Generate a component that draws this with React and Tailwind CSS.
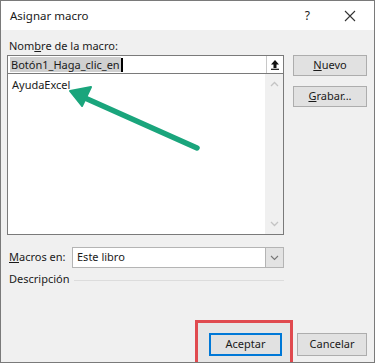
import React from "react";

export default function App() {
  return (
    <div className="relative w-[375px] h-[363px] border border-[#7a7a7a] bg-[#f0f0f0] flex flex-col text-[11px] text-[#1a1a1a] overflow-hidden" style={{ fontFamily: '"Noto Sans", "Open Sans", sans-serif' }}>
      {/* title bar */}
      <div className="h-[29px] bg-white flex items-center pl-[9px] pr-[14px] shrink-0">
        <span className="text-[11.5px] flex-1">Asignar macro</span>
        <span className="text-[12px] mr-[34px]">?</span>
        <svg width="12" height="12" viewBox="0 0 12 12" className="mr-[4px]">
          <path d="M1 1 L11 11 M11 1 L1 11" stroke="#333" strokeWidth="1.1" />
        </svg>
      </div>

      <div className="flex flex-col pl-[6px] pr-[7px] flex-1">
        <div className="h-[25px] flex items-end pl-[2px] pb-[1px]">
          <span>Nom<span className="underline">b</span>re de la macro:</span>
        </div>
        <div className="flex">
          {/* left column */}
          <div className="w-[277px] flex flex-col">
            <div className="h-[19px] border border-[#7a7a7a] bg-white flex items-center">
              <div className="flex-1 flex items-center pl-[2px]">
                <span className="bg-[#d0d0d0] px-[1px] leading-[15px]">Botón1_Haga_clic_en</span>
                <span className="w-[2px] h-[14px] bg-black"></span>
              </div>
              <div className="w-[17px] h-[17px] flex items-center justify-center border-l border-[#c8c8c8] bg-white">
                <svg width="10" height="11" viewBox="0 0 10 11">
                  <path d="M5 1 L1 5.5 H3.5 V9 H6.5 V5.5 H9 Z" fill="#111" />
                  <path d="M1 10.3 H9" stroke="#111" strokeWidth="1.2" />
                </svg>
              </div>
            </div>
            <div className="h-[161px] border border-t-0 border-[#7a7a7a] bg-white flex">
              <div className="flex-1 pl-[4px] pt-[3px] leading-[16px]">AyudaExcel</div>
              <div className="w-[18px] bg-[#f0f0f0] flex flex-col items-center justify-between py-[7px]">
                <svg width="9" height="6" viewBox="0 0 9 6">
                  <path d="M1 5 L4.5 1.5 L8 5" stroke="#c4c4c4" strokeWidth="1.3" fill="none" />
                </svg>
                <svg width="9" height="6" viewBox="0 0 9 6">
                  <path d="M1 1 L4.5 4.5 L8 1" stroke="#c4c4c4" strokeWidth="1.3" fill="none" />
                </svg>
              </div>
            </div>
          </div>
          {/* right column */}
          <div className="flex flex-col ml-[9px] gap-[10px]">
            <div className="w-[74px] h-[21px] bg-[#e1e1e1] border border-[#adadad] flex items-center justify-center">
              <span><span className="underline">N</span>uevo</span>
            </div>
            <div className="w-[74px] h-[21px] bg-[#e1e1e1] border border-[#adadad] flex items-center justify-center">
              <span><span className="underline">G</span>rabar...</span>
            </div>
          </div>
        </div>

        <div className="flex items-center mt-[12px] w-[277px]">
          <span className="w-[65px] pl-[2px]"><span className="underline">M</span>acros en:</span>
          <div className="flex-1 h-[21px] border border-[#b4b4b4] bg-white flex items-center">
            <span className="flex-1 pl-[4px]">Este libro</span>
            <div className="w-[18px] h-[19px] bg-[#e3e3e3] border-l border-[#b4b4b4] flex items-center justify-center">
              <svg width="9" height="6" viewBox="0 0 9 6">
                <path d="M1 1 L4.5 4.5 L8 1" stroke="#777" strokeWidth="1.1" fill="none" />
              </svg>
            </div>
          </div>
        </div>

        <div className="flex items-center mt-[3px] w-[277px] pl-[2px]">
          <span>Descripción</span>
          <div className="flex-1 h-[1px] bg-[#dcdcdc] ml-[4px] mt-[3px]"></div>
        </div>

        <div className="flex-1"></div>

        <div className="flex justify-end items-center mb-[6px] gap-[15px]">
          <div className="relative">
            <div className="absolute -left-[14px] -right-[11px] -top-[13px] -bottom-[9px] border-[3px] border-[#e04a4f] bg-[#e6e6e6]"></div>
            <div className="relative w-[73px] h-[23px] bg-[#e1e1e1] border-2 border-[#0078d7] flex items-center justify-center">
              Aceptar
            </div>
          </div>
          <div className="w-[70px] h-[23px] bg-[#e1e1e1] border border-[#adadad] flex items-center justify-center">
            Cancelar
          </div>
        </div>
      </div>

      {/* green annotation arrow */}
      <svg className="absolute left-0 top-0 pointer-events-none" width="375" height="363" viewBox="0 0 375 363">
        <line x1="196" y1="147" x2="84" y2="97" stroke="#1aa57c" strokeWidth="5.5" strokeLinecap="round" />
        <path d="M69 90 L90 86 L81 105 Z" fill="#1aa57c" stroke="#1aa57c" strokeWidth="2" strokeLinejoin="round" />
      </svg>
    </div>
  );
}
